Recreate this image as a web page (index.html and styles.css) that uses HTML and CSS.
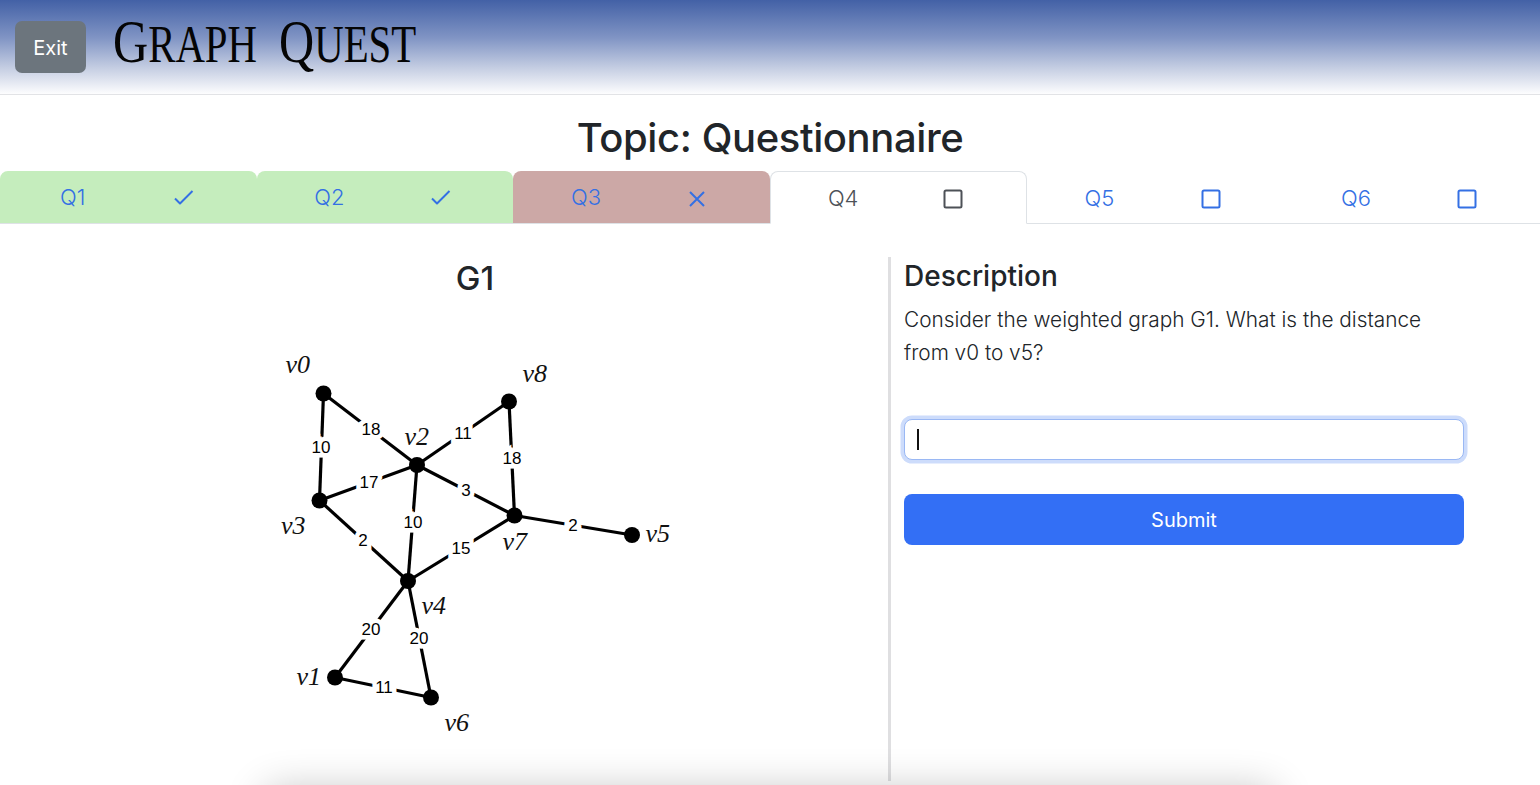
FILE: index.html
```html
<!DOCTYPE html>
<html lang="en">
<head>
<meta charset="utf-8">
<title>Graph Quest</title>
<link rel="stylesheet" href="styles.css">
</head>
<body>
<header class="topbar">
  <button class="exit-btn">Exit</button>
  <div class="logo"><span class="logo-text"><span class="logo-cap">G</span>RAPH<span class="logo-gap"> </span><span class="logo-cap">Q</span>UEST</span></div>
</header>
<h1 class="topic">Topic: Questionnaire</h1>
<nav class="tabs">
  <a class="tab tab-right"><span>Q1</span><svg class="ico" viewBox="0 0 20 20"><path d="M1 9.500 6 14.500 18.500 2"/></svg></a>
  <a class="tab tab-right"><span>Q2</span><svg class="ico" viewBox="0 0 20 20"><path d="M1 9.500 6 14.500 18.500 2"/></svg></a>
  <a class="tab tab-wrong"><span>Q3</span><svg class="ico" viewBox="0 0 20 20"><path d="M3 3 17 17M17 3 3 17"/></svg></a>
  <a class="tab tab-active"><span>Q4</span><svg class="ico" viewBox="0 0 20 20"><rect x="1.500" y="1.500" width="17" height="17" rx="1.500"/></svg></a>
  <a class="tab"><span>Q5</span><svg class="ico" viewBox="0 0 20 20"><rect x="1.500" y="1.500" width="17" height="17" rx="1.500"/></svg></a>
  <a class="tab"><span>Q6</span><svg class="ico" viewBox="0 0 20 20"><rect x="1.500" y="1.500" width="17" height="17" rx="1.500"/></svg></a>
</nav>
<main class="content">
  <section class="graph-col">
    <h2 class="graph-title">G1</h2>
    <svg class="graph" viewBox="255 340 440 420" width="440" height="420">
      <g class="edges">
        <line x1="323.500" y1="393.500" x2="417" y2="465"/>
        <line x1="323.500" y1="393.500" x2="319.500" y2="500.500"/>
        <line x1="319.500" y1="500.500" x2="417" y2="465"/>
        <line x1="319.500" y1="500.500" x2="408" y2="581"/>
        <line x1="417" y1="465" x2="509" y2="401.500"/>
        <line x1="417" y1="465" x2="514.500" y2="515.500"/>
        <line x1="417" y1="465" x2="408" y2="581"/>
        <line x1="509" y1="401.500" x2="514.500" y2="515.500"/>
        <line x1="514.500" y1="515.500" x2="632" y2="535"/>
        <line x1="514.500" y1="515.500" x2="408" y2="581"/>
        <line x1="408" y1="581" x2="335" y2="677.500"/>
        <line x1="408" y1="581" x2="431" y2="697.500"/>
        <line x1="335" y1="677.500" x2="431" y2="697.500"/>
      </g>
      <g class="nodes">
        <circle cx="323.500" cy="393.500" r="8"/><circle cx="509" cy="401.500" r="8"/>
        <circle cx="417" cy="465" r="8"/><circle cx="319.500" cy="500.500" r="8"/>
        <circle cx="514.500" cy="515.500" r="8"/><circle cx="632" cy="535" r="8"/>
        <circle cx="408" cy="581" r="8"/><circle cx="335" cy="677.500" r="8"/>
        <circle cx="431" cy="697.500" r="8"/>
      </g>
      <g class="weights">
        <text x="371" y="435">18</text><text x="321" y="453">10</text>
        <text x="369" y="488">17</text><text x="363" y="546">2</text>
        <text x="463" y="439">11</text><text x="466" y="496">3</text>
        <text x="413" y="528">10</text><text x="512" y="464">18</text>
        <text x="573" y="531">2</text><text x="461" y="554">15</text>
        <text x="371" y="635">20</text><text x="419" y="644">20</text>
        <text x="384" y="693">11</text>
      </g>
      <g class="names">
        <text x="285.500" y="373">v0</text><text x="522.500" y="382">v8</text>
        <text x="404.500" y="445">v2</text><text x="281" y="534">v3</text>
        <text x="502.500" y="550">v7</text><text x="645.500" y="541.500">v5</text>
        <text x="421.500" y="614">v4</text><text x="296.500" y="685">v1</text>
        <text x="444.500" y="731">v6</text>
      </g>
    </svg>
  </section>
  <section class="question-col">
    <h3 class="desc-title">Description</h3>
    <p class="desc-text">Consider the weighted graph G1. What is the distance from v0 to v5?</p>
    <div class="answer">
      <input class="answer-input" type="text" aria-label="Answer">
      <span class="caret"></span>
    </div>
    <button class="submit-btn">Submit</button>
  </section>
</main>
<div class="footer-clip"><footer class="footer-bar"></footer></div>
</body>
</html>
```
FILE: styles.css
```css
html, body {
  margin: 0;
  padding: 0;
  height: 785px;
  overflow: hidden;
  background: #fff;
  font-family: Inter, "Liberation Sans", sans-serif;
  color: #212529;
}
body {
  position: relative;
}
.topbar {
  height: 94px;
  border-bottom: 1px solid #e2e3e6;
  background: linear-gradient(to bottom, #4361a6 0%, #8094c4 40%, #c4cde2 72%, #fdfdfe 100%);
  display: flex;
  align-items: center;
  padding-left: 15px;
}
.exit-btn {
  width: 71px;
  height: 52px;
  margin-top: -1px;
  padding-top: 3px;
  border: 0;
  border-radius: 7px;
  background: #6c757d;
  color: #fff;
  font: 400 20px Inter, "Liberation Sans", sans-serif;
}
.logo {
  margin-left: 27px;
  margin-bottom: 8px;
  width: 304px;
}
.logo-text {
  display: inline-block;
  font-family: "Liberation Serif", serif;
  font-size: 52px;
  line-height: 60px;
  color: #050505;
  white-space: nowrap;
  transform: scaleX(0.785);
  transform-origin: left center;
}
.logo-cap {
  font-size: 62px;
}
.logo-gap {
  display: inline-block;
  width: 28px;
}
.topic {
  margin: 0;
  height: 76px;
  line-height: 86px;
  text-align: center;
  font-size: 40px;
  font-weight: 450;
  letter-spacing: -0.4px;
}
.tabs {
  display: grid;
  grid-template-columns: repeat(6, 1fr);
  height: 52px;
  border-bottom: 1px solid #dee2e6;
}
.tab {
  display: grid;
  grid-template-columns: 1fr 1fr;
  align-items: center;
  justify-items: center;
  padding: 0 17px;
  height: 53px;
  box-sizing: border-box;
  border-radius: 8px 8px 0 0;
  color: #3470e4;
  font-size: 22px;
  font-weight: 350;
}
.ico {
  width: 20px;
  height: 20px;
  fill: none;
  stroke: currentColor;
  stroke-width: 2;
  stroke-linejoin: round;
  margin-top: 3px;
}
.tab-right {
  background: #c5edbd;
  height: 52px;
}
.tab-wrong {
  background: #cca8a6;
  height: 52px;
}
.tab-active {
  background: #fff;
  color: #4d5157;
  border: 1px solid #dee2e6;
  border-bottom-color: #fff;
}
.content {
  display: flex;
  height: 524px;
  margin-top: 33px;
}
.graph-col {
  box-sizing: border-box;
  width: 888px;
  padding-left: 62px;
  display: flex;
  flex-direction: column;
  align-items: center;
}
.graph-title {
  margin: 0;
  height: 83px;
  line-height: 42px;
  font-size: 33px;
  font-weight: 450;
}
.graph {
  display: block;
}
.edges line {
  stroke: #000;
  stroke-width: 3.200;
}
.nodes circle {
  fill: #000;
}
.weights text {
  font-family: "Liberation Sans", sans-serif;
  font-size: 17px;
  text-anchor: middle;
  fill: #000;
  stroke: #fff;
  stroke-width: 9px;
  paint-order: stroke;
}
.names text {
  font-family: "Liberation Serif", serif;
  font-style: italic;
  font-size: 26px;
  fill: #111;
}
.question-col {
  box-sizing: border-box;
  width: 589px;
  margin-right: 63px;
  border-left: 3px solid #dfdfe1;
  padding-left: 13px;
  padding-right: 13px;
}
.desc-title {
  margin: 2px 0 0;
  font-size: 28px;
  line-height: 34px;
  font-weight: 450;
}
.desc-text {
  margin: 10px 0 0;
  font-size: 20.800px;
  font-weight: 350;
  line-height: 33px;
  width: 545px;
}
.answer {
  position: relative;
  height: 41px;
  margin-top: 50px;
}
.answer-input {
  display: block;
  box-sizing: border-box;
  width: 100%;
  height: 41px;
  border: 1px solid #9ab8f4;
  border-radius: 8px;
  outline: 0;
  box-shadow: 0 0 0 3.500px #cddcfb;
  background: #fff;
}
.caret {
  position: absolute;
  left: 13px;
  top: 10px;
  width: 2px;
  height: 21px;
  background: #111;
}
.submit-btn {
  display: block;
  width: 100%;
  height: 51px;
  margin-top: 34px;
  border: 0;
  border-radius: 8px;
  background: #336ff5;
  color: #fff;
  font: 400 20px Inter, "Liberation Sans", sans-serif;
}
.footer-clip {
  position: absolute;
  left: 0;
  right: 0;
  bottom: 0;
  height: 50px;
  overflow: hidden;
  pointer-events: none;
}
.footer-bar {
  width: 1010px;
  height: 60px;
  margin: 55px 0 0 265px;
  border-radius: 12px;
  box-shadow: 0 0 40px rgba(0, 0, 0, 0.24);
}
```
